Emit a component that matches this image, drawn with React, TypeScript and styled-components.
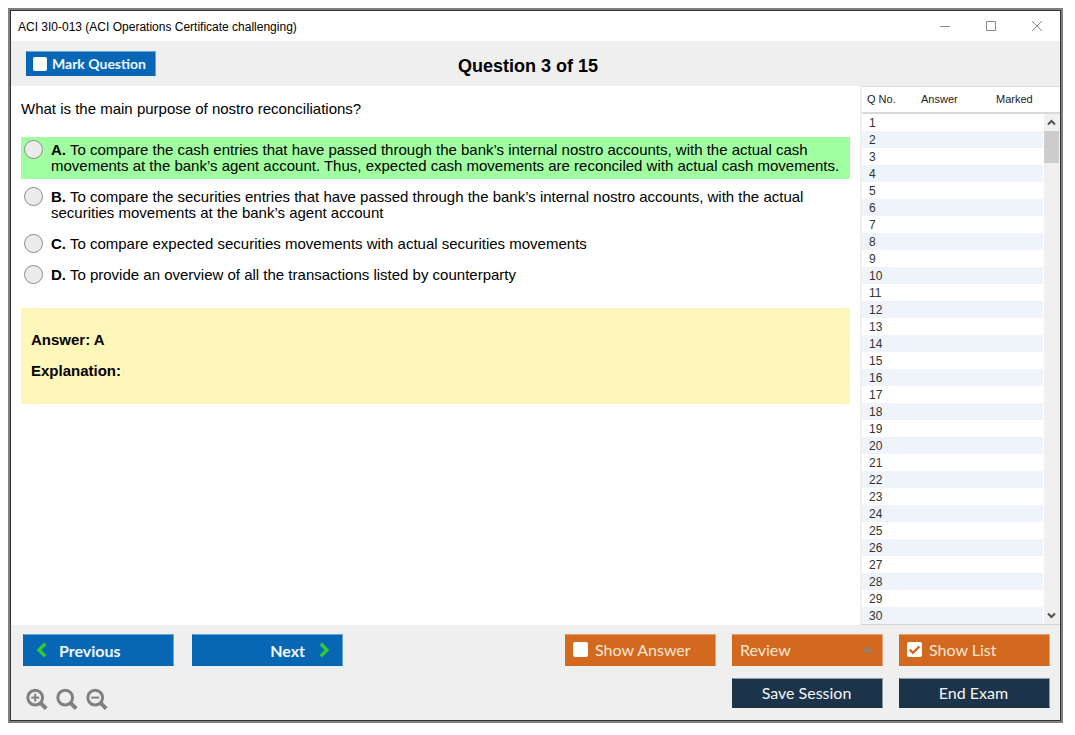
import React, { useRef, useState } from "react";
import styled, { createGlobalStyle } from "styled-components";

const GlobalStyle = createGlobalStyle`
  * { box-sizing: border-box; }
  body {
    margin: 0;
    background: #fff;
    color: #000;
    font-family: "Liberation Sans", Arial, sans-serif;
  }
  button, input { font: inherit; margin: 0; }
  button { border: 0; padding: 0; background: none; color: inherit; }
`;

const Shell = styled.div`
  display: flex;
  height: 100vh;
  min-height: 480px;
  padding: 8px 12px 12px 8px;
`;

const Frame = styled.div`
  flex: 1;
  min-width: 0;
  display: flex;
  border: 2px solid #808080;
`;

const Window = styled.div`
  flex: 1;
  min-width: 0;
  display: flex;
  flex-direction: column;
  border: 1px solid #333;
  background: #efefef;
`;

const TitleBar = styled.header`
  display: flex;
  align-items: stretch;
  justify-content: space-between;
  height: 30px;
  flex: none;
  background: #fff;
`;

const WindowTitle = styled.span`
  padding-left: 7px;
  font-size: 12px;
  line-height: 32px;
`;

const WindowControls = styled.div`
  display: flex;
`;

const WindowButton = styled.button`
  display: grid;
  place-items: center;
  width: 46px;
  color: #8a8a8a;
`;

const QuestionBar = styled.div`
  display: grid;
  grid-template-columns: 1fr auto 1fr;
  align-items: center;
  height: 45px;
  flex: none;
  padding: 0 30px 0 15px;
`;

const QuestionCount = styled.h1`
  margin: 0;
  padding-top: 4px;
  font-size: 18px;
  line-height: 20px;
`;

type Tone = "blue" | "orange" | "navy";
const tones: Record<Tone, { fill: string; edge: string; text: string }> = {
  blue: { fill: "#0767b5", edge: "#6ba5d3", text: "#f1f7fc" },
  orange: { fill: "#d2691e", edge: "#e3a273", text: "#fbe6d6" },
  navy: { fill: "#1b344a", edge: "#8d9aa5", text: "#f3f5f7" },
};

const buttonFace = (tone: Tone) => `
  background: ${tones[tone].fill};
  color: ${tones[tone].text};
  border: 1px solid ${tones[tone].edge};
  border-left-color: ${tones[tone].fill};
  border-bottom-color: ${tones[tone].fill};
  font-family: Lato, Carlito, Calibri, sans-serif;
`;

const MarkToggle = styled.label`
  ${buttonFace("blue")}
  justify-self: start;
  display: flex;
  align-items: center;
  gap: 5px;
  width: 130px;
  height: 25px;
  padding-left: 6px;
  font-size: 14px;
  font-weight: 700;
  white-space: nowrap;
`;

const Toggle = styled.label`
  ${buttonFace("orange")}
  display: flex;
  align-items: center;
  gap: 7px;
  padding: 0 0 2px 7px;
  font-size: 16px;
  white-space: nowrap;
`;

const CheckInput = styled.input<{ $size: number }>`
  appearance: none;
  flex: none;
  width: ${(p) => p.$size}px;
  height: ${(p) => p.$size}px;
  border-radius: 2px;
  background: #fff;
  &:checked {
    background: #fff
      url("data:image/svg+xml,%3Csvg xmlns='http://www.w3.org/2000/svg' viewBox='0 0 15 15'%3E%3Cpath d='M2.8 7.6l3.2 3.2 6.4-6.4' fill='none' stroke='%23d2691e' stroke-width='2.3'/%3E%3C/svg%3E")
      center / 100% no-repeat;
  }
`;

const Body = styled.div`
  flex: 1;
  min-height: 0;
  display: flex;
`;

const Content = styled.main`
  flex: 1;
  min-width: 0;
  overflow: hidden;
  padding: 15px 10px 0;
  background: #fff;
  font-size: 15px;
  line-height: 16px;
`;

const Prompt = styled.p`
  margin: 0 0 20px;
`;

const Options = styled.div`
  display: flex;
  flex-direction: column;
  gap: 5px;
`;

const Option = styled.label<{ $correct?: boolean }>`
  display: flex;
  align-items: flex-start;
  gap: 8px;
  padding: 5px 10px 5px 3px;
  background: ${(p) => (p.$correct ? "#a0ffa0" : "transparent")};
`;

const RadioInput = styled.input`
  appearance: none;
  flex: none;
  width: 19px;
  height: 19px;
  margin: -2px 0;
  border: 1px solid #8c8c8c;
  border-radius: 50%;
  background: #ececec;
  &:checked { box-shadow: inset 0 0 0 4px #ececec; background: #333; }
`;

const AnswerBox = styled.section`
  display: flex;
  flex-direction: column;
  gap: 15px;
  margin-top: 20px;
  padding: 24px 10px 25px;
  background: #fff7b9;
  font-weight: 700;
`;

const AnswerLine = styled.p`
  margin: 0;
`;

const Side = styled.aside`
  display: flex;
  width: 200px;
  flex: none;
  border-left: 2px solid #f0f0f0;
  border-bottom: 1px solid #d4d4d4;
  background: #fff;
`;

const ListView = styled.div`
  flex: 1;
  overflow: hidden;
`;

const QuestionTable = styled.table`
  width: 100%;
  border-collapse: separate;
  border-spacing: 0;
  table-layout: fixed;
`;

const HeadCell = styled.th`
  position: sticky;
  top: 0;
  height: 28px;
  padding: 0 0 2px 5px;
  border-top: 1px solid #d9d9d9;
  border-bottom: 2px solid #d9d9d9;
  background: #fff;
  color: #222;
  font-size: 11px;
  font-weight: 400;
  text-align: left;
  white-space: nowrap;
`;

const NumberRow = styled.tr`
  &:nth-child(even) { background: #eef4f9; }
`;

const NumberCell = styled.td`
  height: 17px;
  padding: 2px 0 0 7px;
  color: #333;
  font-size: 12px;
  line-height: 15px;
`;

const ScrollColumn = styled.div`
  display: flex;
  flex-direction: column;
  width: 17px;
`;

const ScrollCap = styled.div`
  height: 28px;
  flex: none;
  border-top: 1px solid #d9d9d9;
  border-bottom: 2px solid #d9d9d9;
`;

const ScrollTrack = styled.div`
  flex: 1;
  display: flex;
  flex-direction: column;
  margin-left: 1px;
  background: #f0f0f0;
`;

const ScrollButton = styled.button`
  display: grid;
  place-items: center;
  width: 15px;
  height: 17px;
  color: #505050;
`;

const ScrollThumb = styled.div`
  width: 15px;
  height: 32px;
  margin-bottom: auto;
  background: #cdcdcd;
`;

const Footer = styled.footer`
  display: flex;
  align-items: flex-start;
  justify-content: space-between;
  flex: none;
  padding: 9px 10px 10px 12px;
`;

const FooterLeft = styled.div`
  display: flex;
  flex-direction: column;
  gap: 22px;
`;

const NavRow = styled.div`
  display: flex;
  gap: 18px;
`;

const NavButton = styled.button<{ $end?: boolean }>`
  ${buttonFace("blue")}
  display: flex;
  align-items: center;
  justify-content: ${(p) => (p.$end ? "flex-end" : "flex-start")};
  gap: ${(p) => (p.$end ? 14 : 12)}px;
  width: 151px;
  height: 32px;
  padding: 0 12px;
  font-size: 16px;
  font-weight: 700;
`;

const ZoomRow = styled.div`
  display: flex;
  gap: 8px;
  padding-left: 3px;
`;

const ZoomButton = styled.button`
  width: 22px;
  height: 22px;
  color: #808080;
  svg { display: block; }
`;

const Actions = styled.div`
  display: grid;
  grid-template-columns: repeat(3, 151px);
  grid-template-rows: 32px 30px;
  gap: 12px 16px;
`;

const ReviewButton = styled.button`
  ${buttonFace("orange")}
  display: flex;
  align-items: center;
  justify-content: space-between;
  padding: 0 9px 2px 7px;
  font-size: 16px;
`;

const SessionButton = styled.button<{ $column?: number }>`
  ${buttonFace("navy")}
  grid-column: ${(p) => p.$column ?? "auto"};
  font-size: 16px;
  padding: 0 2px 2px 0;
`;

const Chevron = ({ flip }: { flip?: boolean }) => (
  <svg width="11" height="16" viewBox="0 0 11 16" fill="none" stroke="#2ecc32" strokeWidth="3.4">
    <path d={flip ? "M1.8 1.8L8 8l-6.2 6.2" : "M9.2 1.8L3 8l6.2 6.2"} />
  </svg>
);

const Lens = ({ sign }: { sign?: "plus" | "minus" }) => (
  <svg width="22" height="22" viewBox="0 0 22 22" fill="none" stroke="currentColor">
    <circle cx="9.2" cy="9.6" r="7.4" strokeWidth="3" />
    <path d="M14.2 14.6l6 6" strokeWidth="4" />
    {sign && <path d="M5.2 9.6h8" strokeWidth="2" />}
    {sign === "plus" && <path d="M9.2 5.6v8" strokeWidth="2" />}
  </svg>
);

const Arrow = ({ down }: { down?: boolean }) => (
  <svg width="9" height="7" viewBox="0 0 9 7" fill="none" stroke="currentColor" strokeWidth="2">
    <path d={down ? "M1 1.5l3.5 3.5L8 1.5" : "M1 5.5L4.5 2 8 5.5"} />
  </svg>
);

const options = [
  {
    key: "A",
    text: "To compare the cash entries that have passed through the bank’s internal nostro accounts, with the actual cash movements at the bank’s agent account. Thus, expected cash movements are reconciled with actual cash movements.",
    correct: true,
  },
  {
    key: "B",
    text: "To compare the securities entries that have passed through the bank’s internal nostro accounts, with the actual securities movements at the bank’s agent account",
  },
  { key: "C", text: "To compare expected securities movements with actual securities movements" },
  { key: "D", text: "To provide an overview of all the transactions listed by counterparty" },
];

const numbers = Array.from({ length: 30 }, (_, i) => i + 1);

export default function App() {
  const [showList, setShowList] = useState(true);
  const list = useRef<HTMLDivElement>(null);
  const scroll = (by: number) => list.current?.scrollBy({ top: by });

  return (
    <Shell>
      <GlobalStyle />
      <Frame>
        <Window>
          <TitleBar>
            <WindowTitle>ACI 3I0-013 (ACI Operations Certificate challenging)</WindowTitle>
            <WindowControls>
              <WindowButton aria-label="Minimize">
                <svg width="10" height="10" stroke="currentColor"><path d="M0 5.5h10" /></svg>
              </WindowButton>
              <WindowButton aria-label="Maximize">
                <svg width="10" height="10" fill="none" stroke="currentColor"><path d="M.5.5h9v9h-9z" /></svg>
              </WindowButton>
              <WindowButton aria-label="Close">
                <svg width="10" height="10" stroke="currentColor"><path d="M0 0l10 10M10 0L0 10" /></svg>
              </WindowButton>
            </WindowControls>
          </TitleBar>

          <QuestionBar>
            <MarkToggle>
              <CheckInput type="checkbox" $size={14} />
              Mark Question
            </MarkToggle>
            <QuestionCount>Question 3 of 15</QuestionCount>
          </QuestionBar>

          <Body>
            <Content>
              <Prompt>What is the main purpose of nostro reconciliations?</Prompt>
              <Options role="radiogroup" aria-label="Answers">
                {options.map((o) => (
                  <Option key={o.key} $correct={o.correct}>
                    <RadioInput type="radio" name="answer" value={o.key} />
                    <span>
                      <b>{o.key}.</b> {o.text}
                    </span>
                  </Option>
                ))}
              </Options>
              <AnswerBox>
                <AnswerLine>Answer: A</AnswerLine>
                <AnswerLine>Explanation:</AnswerLine>
              </AnswerBox>
            </Content>

            {showList && (
              <Side>
                <ListView ref={list}>
                  <QuestionTable>
                    <colgroup>
                      <col width="54" />
                      <col width="75" />
                      <col />
                    </colgroup>
                    <thead>
                      <tr>
                        <HeadCell>Q No.</HeadCell>
                        <HeadCell>Answer</HeadCell>
                        <HeadCell>Marked</HeadCell>
                      </tr>
                    </thead>
                    <tbody>
                      {numbers.map((n) => (
                        <NumberRow key={n}>
                          <NumberCell>{n}</NumberCell>
                          <NumberCell />
                          <NumberCell />
                        </NumberRow>
                      ))}
                    </tbody>
                  </QuestionTable>
                </ListView>
                <ScrollColumn>
                  <ScrollCap />
                  <ScrollTrack>
                    <ScrollButton aria-label="Scroll up" onClick={() => scroll(-17)}>
                      <Arrow />
                    </ScrollButton>
                    <ScrollThumb />
                    <ScrollButton aria-label="Scroll down" onClick={() => scroll(17)}>
                      <Arrow down />
                    </ScrollButton>
                  </ScrollTrack>
                </ScrollColumn>
              </Side>
            )}
          </Body>

          <Footer>
            <FooterLeft>
              <NavRow>
                <NavButton>
                  <Chevron />
                  Previous
                </NavButton>
                <NavButton $end>
                  Next
                  <Chevron flip />
                </NavButton>
              </NavRow>
              <ZoomRow>
                <ZoomButton aria-label="Zoom in"><Lens sign="plus" /></ZoomButton>
                <ZoomButton aria-label="Reset zoom"><Lens /></ZoomButton>
                <ZoomButton aria-label="Zoom out"><Lens sign="minus" /></ZoomButton>
              </ZoomRow>
            </FooterLeft>
            <Actions>
              <Toggle>
                <CheckInput type="checkbox" $size={15} />
                Show Answer
              </Toggle>
              <ReviewButton aria-haspopup="menu">
                Review
                <svg width="11" height="6" fill="#8b8378"><path d="M0 6L5.5 0 11 6z" /></svg>
              </ReviewButton>
              <Toggle>
                <CheckInput
                  type="checkbox"
                  $size={15}
                  checked={showList}
                  onChange={(e) => setShowList(e.target.checked)}
                />
                Show List
              </Toggle>
              <SessionButton $column={2}>Save Session</SessionButton>
              <SessionButton $column={3}>End Exam</SessionButton>
            </Actions>
          </Footer>
        </Window>
      </Frame>
    </Shell>
  );
}
